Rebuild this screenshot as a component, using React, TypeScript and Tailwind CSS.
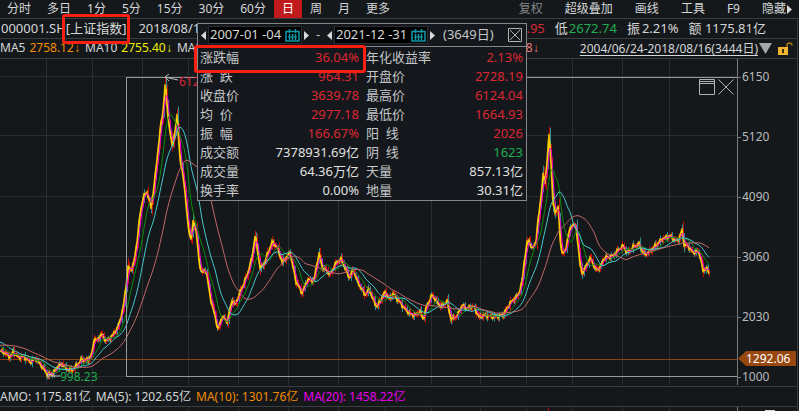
type Point = [number, number];

const periods = ["分时", "多日", "1分", "5分", "15分", "30分", "60分", "日", "周", "月", "更多"];
const tools = ["复权", "超级叠加", "画线", "工具", "F9"];
const priceTicks = [6150, 5120, 4090, 3060, 2030, 1000];

const stats = [
  ["涨跌幅", "36.04%", "年化收益率", "2.13%"],
  ["涨  跌", "964.31", "开盘价", "2728.19"],
  ["收盘价", "3639.78", "最高价", "6124.04"],
  ["均  价", "2977.18", "最低价", "1664.93"],
  ["振  幅", "166.67%", "阳  线", "2026"],
  ["成交额", "7378931.69亿", "阴  线", "1623"],
  ["成交量", "64.36万亿", "天量", "857.13亿"],
  ["换手率", "0.00%", "地量", "30.31亿"],
];

const gridX = [46, 92, 142, 188, 238, 288, 338, 385, 431, 480, 526, 572, 622, 669];
const gridY = [76, 135, 196, 256, 316, 376];

// Turning points of the index, the part before x = 0 only feeds the averages
const turns: Point[] = [
  [-50, 358], [-30, 345], [-15, 337], [-5, 345], [0, 351], [5, 353], [10, 357], [13, 352], [18, 357], [24, 357],
  [30, 362], [36, 359], [40, 364], [47, 374], [53, 374], [57, 367], [62, 364], [66, 369], [72, 370], [77, 365],
  [81, 360], [88, 360], [92, 353], [94, 338], [97, 341], [101, 334], [106, 341], [112, 336], [118, 327], [123, 308],
  [126, 285], [128, 267], [131, 270], [134, 262], [137, 240], [140, 214], [143, 197], [147, 192], [151, 208],
  [155, 177], [160, 130], [163, 110], [165, 84], [168, 118], [172, 147], [175, 130], [177, 116], [180, 160],
  [184, 183], [188, 227], [191, 240], [193, 222], [196, 230], [199, 263], [202, 273], [206, 270], [210, 297],
  [215, 317], [218, 330], [222, 316], [227, 322], [232, 300], [235, 305], [240, 292], [247, 275], [252, 257],
  [255, 235], [260, 268], [264, 264], [267, 255], [272, 242], [277, 247], [282, 262], [290, 253], [293, 268],
  [296, 282], [302, 293], [307, 280], [314, 280], [317, 262], [319, 254], [322, 267], [326, 270], [330, 275],
  [335, 264], [341, 259], [345, 268], [349, 278], [353, 270], [358, 283], [365, 295], [369, 289], [373, 300],
  [377, 307], [381, 299], [385, 292], [389, 299], [393, 294], [398, 300], [404, 308], [410, 314], [415, 315],
  [420, 312], [423, 319], [427, 305], [432, 295], [437, 302], [441, 307], [447, 301], [449, 311], [451, 319],
  [457, 316], [462, 305], [467, 309], [473, 306], [479, 317], [485, 315], [493, 317], [503, 315], [510, 303],
  [518, 295], [522, 282], [524, 262], [527, 243], [529, 240], [532, 250], [536, 240], [538, 220], [541, 195],
  [543, 175], [545, 183], [547, 160], [549, 135], [551, 165], [553, 205], [555, 212], [558, 206], [560, 240],
  [562, 253], [565, 252], [568, 235], [572, 224], [576, 227], [578, 245], [580, 266], [582, 273], [585, 268],
  [590, 258], [596, 270], [600, 267], [604, 258], [609, 257], [613, 256], [618, 250], [623, 246], [627, 253],
  [633, 247], [639, 244], [643, 253], [646, 254], [653, 248], [662, 239], [670, 236], [676, 241], [679, 238],
  [682, 230], [684, 245], [688, 246], [693, 253], [697, 251], [700, 256], [703, 272], [706, 267], [709, 274],
];

const firstX = -50;
const lastX = 709;

const series: number[] = [];
for (let x = firstX, i = 0; x <= lastX; x++) {
  while (turns[i + 1][0] < x) i++;
  const [x0, y0] = turns[i];
  const [x1, y1] = turns[i + 1];
  series.push(y0 + ((y1 - y0) * (x - x0)) / (x1 - x0) + Math.sin(x * 2.3) * 1.3 + Math.sin(x * 5.1) * 1.2);
}

function average(span: number) {
  let d = "";
  for (let x = 0; x <= lastX; x++) {
    const end = x - firstX + 1;
    const part = series.slice(Math.max(0, end - span), end);
    const y = part.reduce((a, b) => a + b, 0) / part.length;
    d += `${x === 0 ? "M" : "L"}${x} ${y.toFixed(1)}`;
  }
  return d;
}

function candles(rising: boolean) {
  let d = "";
  for (let x = 1; x <= lastX; x++) {
    if (Math.sin(x * 3.7) > -0.4 !== rising) continue;
    const now = series[x - firstX];
    const prev = series[x - firstX - 1];
    const wick = Math.min(6, Math.abs(now - prev) * 0.5) + Math.abs(Math.sin(x * 7.1)) * 2;
    d += `M${x}.5 ${(Math.min(now, prev) - wick).toFixed(1)}V${(Math.max(now, prev) + wick).toFixed(1)}`;
  }
  return d;
}

function Arrow({ left = false }: { left?: boolean }) {
  return (
    <svg width="5" height="9" viewBox="0 0 5 9" fill="#d8d8d8">
      <path d={left ? "M5 0v9L0 4.500z" : "M0 0v9l5-4.500z"} />
    </svg>
  );
}

function Down() {
  return <span className='font-["Liberation_Mono",monospace]'>↓</span>;
}

function DateField({ label, value }: { label: string; value: string }) {
  return (
    <div className="flex items-center gap-[2px]">
      <button aria-label={`${label}前一日`}>
        <Arrow left />
      </button>
      <div className="flex h-[18px] items-center border border-[#2a2d30] bg-black pr-px">
        <input aria-label={label} defaultValue={value} className="w-[76px] bg-transparent pl-px text-[#d8d8d8] outline-none" />
        <button aria-label={`选择${label}`}>
          <svg width="15" height="13" viewBox="0 0 15 13" fill="none" stroke="#0f9aac">
            <path d="M1 2.500h13v9.500H1z" strokeWidth="1.500" />
            <path d="M4.500 0v4M10.500 0v4M4.500 5v6M7.500 5v6M10.500 5v6" strokeWidth="1.500" />
            <path d="M3 8h9" />
          </svg>
        </button>
      </div>
      <button aria-label={`${label}后一日`}>
        <Arrow />
      </button>
    </div>
  );
}

function valueColor(text: string, row: number) {
  if (text === "1623") return "text-[#1fae50]";
  return row < 5 ? "text-[#dc2733]" : "text-[#e0e0e0]";
}

function StatsPanel() {
  return (
    <div className="absolute left-[197px] top-[23px] w-[330px] border border-[#85878a] bg-[#14181c] text-[13px] text-[#c4c6c8]">
      <div className="flex h-[23px] items-center border-b border-[#85878a] pl-[3px] pr-[4px]">
        <DateField label="起始日期" value="2007-01 -04" />
        <span className="w-[18px] text-center">-</span>
        <DateField label="截止日期" value="2021-12 -31" />
        <span className="ml-[8px]">(3649日)</span>
        <button aria-label="关闭统计" className="ml-auto">
          <svg width="14" height="14" viewBox="0 0 14 14" fill="none" stroke="#b0b2b4">
            <path d="M.5.5h13v13H.5zM2 2l10 10M12 2 2 12" />
          </svg>
        </button>
      </div>
      <table className="mt-px w-full table-fixed">
        <colgroup>
          <col className="w-[60px]" />
          <col className="w-[101px]" />
          <col className="w-[82px]" />
          <col />
        </colgroup>
        <tbody>
          {stats.map(([a, b, c, d], row) => (
            <tr key={a} className="h-[19px] whitespace-pre leading-[19px]">
              <th className="pl-[2px] text-left font-normal">{a}</th>
              <td className={`text-right ${valueColor(b, row)}`}>{b}</td>
              <th className="pl-[7px] text-left font-normal">{c}</th>
              <td className={`pr-[3px] text-right ${valueColor(d, row)}`}>{d}</td>
            </tr>
          ))}
        </tbody>
      </table>
      <div className="pointer-events-none absolute -left-[4px] top-[21px] h-[28px] w-[172px] rounded-[3px] border-[3px] border-[#fb1f12]" />
    </div>
  );
}

function Chart() {
  return (
    <svg viewBox="0 59 738 327" className="block w-full" fill="none">
      <g stroke="#2b2e31" shapeRendering="crispEdges">
        {gridX.map((x) => (
          <path key={x} d={`M${x}.5 59V385`} />
        ))}
        {gridY.map((y) => (
          <path key={y} d={`M0 ${y}.5H737`} />
        ))}
      </g>
      <path d="M0 359.500H737" stroke="#8a4612" shapeRendering="crispEdges" />
      <path d={candles(true)} stroke="#c00c08" />
      <path d={candles(false)} stroke="#2c8f93" />
      <path d={average(1)} stroke="#f0b400" strokeWidth="1.500" />
      <path d={average(2)} stroke="#f4e000" />
      <path d={average(4)} stroke="#e800d8" />
      <path d={average(12)} stroke="#0b8a0b" />
      <path d={average(24)} stroke="#45c8cc" />
      <path d={average(48)} stroke="#c06868" />
      <path d="M126.500 376.500V77.500H737M126.500 376.500H737" stroke="#97999b" shapeRendering="crispEdges" />
      <path d="M737.500 59V385" stroke="#77797b" shapeRendering="crispEdges" />
      <path d="M178 80 165 77M169 74l-4 3 4 4M60 376H47M50 379l-3-4 5-1" stroke="#c0c0c0" />
      <text x="179" y="86" fontSize="12" fill="#dc2733">6124</text>
      <text x="60" y="381" fontSize="12" fill="#1fae50">998.23</text>
    </svg>
  );
}

export default function App() {
  return (
    <div className='relative flex flex-col overflow-hidden bg-[#14181b] font-["Noto_Sans","Noto_Sans_CJK_SC",sans-serif] text-[12px] text-[#d4d6d8]'>
      <nav className="flex h-[19px] items-center justify-between whitespace-nowrap border-b border-[#3a3d40] leading-[18px]">
        <div className="-ml-px flex">
          {periods.map((name) => (
            <button key={name} className={name === "日" ? "bg-[#c01a1c] px-2 text-white" : "px-2"}>
              {name}
            </button>
          ))}
        </div>
        <div className="flex gap-[22px] pr-[7px]">
          {tools.map((name) => (
            <button key={name} className={name === "复权" ? "text-[#85878a]" : ""}>
              {name}
            </button>
          ))}
          <button className="flex items-center gap-px">
            隐藏
            <Arrow />
          </button>
        </div>
      </nav>

      <div className="mr-[1px] border-r border-[#3a3d40]">
        <header className="flex h-[20px] items-center justify-between whitespace-nowrap border-b border-[#3a3d40] pr-[31px] text-[13px]">
          <div className="flex gap-[12px] pl-px">
            <h1 className="relative">
              000001.SH[上证指数]
              <span className="pointer-events-none absolute -right-[4px] -top-[5px] h-[30px] w-[68px] rounded-[3px] border-[3px] border-[#fb1f12]" />
            </h1>
            <span>2018/08/16</span>
          </div>
          <div className="flex gap-[10px]">
            <span className="text-[#dc2733]">2722.95</span>
            <span className="flex gap-px">低<b className="font-normal text-[#1fae50]">2672.74</b></span>
            <span className="flex gap-[2px]">振<b className="font-normal">2.21%</b></span>
            <span>额 1175.81亿</span>
          </div>
        </header>

        <div className="flex h-[20px] items-center justify-between whitespace-nowrap border-b border-[#3a3d40] pr-[4px]">
          <div className="flex gap-[4px]">
            <span>MA5</span>
            <span className="text-[#f08c00]">2758.12<Down /></span>
            <span>MA10</span>
            <span className="text-[#f0f000]">2755.40<Down /></span>
            <span>MA20</span>
          </div>
          <div className="flex items-center">
            <span className="mr-[40px] text-[#e87878]">3064.98<Down /></span>
            <button className="leading-[14px] underline underline-offset-2">2004/06/24-2018/08/16(3444日)</button>
            <svg width="13" height="11" viewBox="0 0 13 11" fill="#a4a6a8" className="ml-px">
              <path d="M0 0h13L6.500 11z" />
            </svg>
            <button aria-label="锁定区间" className="ml-[6px]">
              <svg width="15" height="13" viewBox="0 0 15 13" fill="none">
                <path d="M9 5V3.500a2.500 2.500 0 0 1 5 0" stroke="#a87414" strokeWidth="1.500" />
                <path d="M0 5h10v8H0z" fill="#f2b632" />
                <path d="M5 7v4" stroke="#3a2c10" strokeWidth="2" />
              </svg>
            </button>
          </div>
        </div>

        <main className="flex">
          <div className="relative min-w-0 flex-1">
            <Chart />
            <div className="absolute right-[4px] top-[20px] flex gap-[3px] text-[#b0b2b4]">
              <button aria-label="最大化">
                <svg width="16" height="16" viewBox="0 0 16 16" fill="none" stroke="currentColor">
                  <path d="M.5.5h15v15H.5zM.5 4.500h15M.5 2.500h15" />
                </svg>
              </button>
              <button aria-label="关闭">
                <svg width="16" height="16" viewBox="0 0 16 16" fill="none" stroke="currentColor">
                  <path d="m.5.5 15 15M15.500.5l-15 15" />
                </svg>
              </button>
            </div>
          </div>
          <ol className="relative -mb-[24px] -mt-[13px] w-[59px] pt-px text-[#b8babc]">
            {priceTicks.map((tick) => (
              <li key={tick} className="flex h-[60px] items-center gap-px">
                <span className="h-px w-[3px] bg-[#77797b]" />
                {tick}
              </li>
            ))}
            <li className="absolute left-0 top-[305px] flex h-[15px] items-center text-white">
              <svg width="8" height="15" viewBox="0 0 8 15" fill="#98480f">
                <path d="M8 0v15L0 7.500z" />
              </svg>
              <span className="w-[50px] bg-[#98480f] leading-[15px]">1292.06</span>
            </li>
          </ol>
        </main>

        <footer>
          <div className="flex h-[21px] items-center gap-[5px] whitespace-nowrap border-y border-[#3a3d40]">
            <span>AMO: 1175.81亿</span>
            <span>MA(5): 1202.65亿</span>
            <span className="text-[#f08c00]">MA(10): 1301.76亿</span>
            <span className="text-[#e800e8]">MA(20): 1458.22亿</span>
          </div>
          <svg viewBox="0 0 797 4" className="block w-full" shapeRendering="crispEdges">
            {gridX.map((x) => (
              <path key={x} d={`M${x}.5 0V4`} stroke="#2b2e31" />
            ))}
            <path d="M737.500 0V4" stroke="#77797b" />
            <path d="M548.500 1V4" stroke="#b80a08" />
            <path d="M765 3.500H775" stroke="#d4d6d8" />
          </svg>
        </footer>
      </div>

      <StatsPanel />
    </div>
  );
}
